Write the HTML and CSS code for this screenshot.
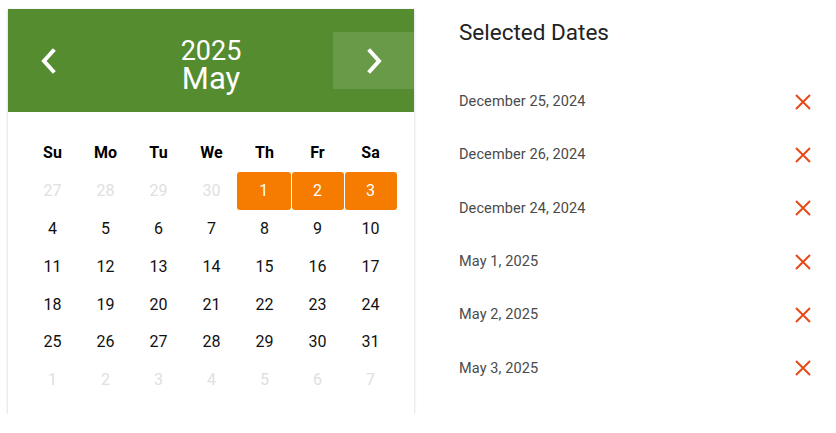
FILE: index.html
```html
<!DOCTYPE html>
<html>
<head>
<meta charset="utf-8">
<link rel="stylesheet" href="styles.css">
</head>
<body>
<div class="page">
  <div class="calendar">
    <div class="cal-header">
      <button class="nav">
        <svg width="22" height="26" viewBox="0 0 22 26"><path d="M15 3 L6 13 L15 23" fill="none" stroke="#fff" stroke-width="4" stroke-linecap="square"/></svg>
      </button>
      <div class="title">
        <div class="year">2025</div>
        <div class="month">May</div>
      </div>
      <button class="nav nav-active">
        <svg width="22" height="26" viewBox="0 0 22 26"><path d="M7 3 L16 13 L7 23" fill="none" stroke="#fff" stroke-width="4" stroke-linecap="square"/></svg>
      </button>
    </div>
    <div class="cal-body">
      <div class="grid">
        <div class="wd">Su</div><div class="wd">Mo</div><div class="wd">Tu</div><div class="wd">We</div><div class="wd">Th</div><div class="wd">Fr</div><div class="wd">Sa</div>
        <div class="d off">27</div><div class="d off">28</div><div class="d off">29</div><div class="d off">30</div><div class="d sel">1</div><div class="d sel">2</div><div class="d sel">3</div>
        <div class="d">4</div><div class="d">5</div><div class="d">6</div><div class="d">7</div><div class="d">8</div><div class="d">9</div><div class="d">10</div>
        <div class="d">11</div><div class="d">12</div><div class="d">13</div><div class="d">14</div><div class="d">15</div><div class="d">16</div><div class="d">17</div>
        <div class="d">18</div><div class="d">19</div><div class="d">20</div><div class="d">21</div><div class="d">22</div><div class="d">23</div><div class="d">24</div>
        <div class="d">25</div><div class="d">26</div><div class="d">27</div><div class="d">28</div><div class="d">29</div><div class="d">30</div><div class="d">31</div>
        <div class="d off">1</div><div class="d off">2</div><div class="d off">3</div><div class="d off">4</div><div class="d off">5</div><div class="d off">6</div><div class="d off">7</div>
      </div>
    </div>
  </div>
  <div class="selected">
    <h2>Selected Dates</h2>
    <ul class="list">
      <li><span>December 25, 2024</span><button class="rm"><svg width="18" height="18" viewBox="0 0 18 18"><path d="M2 2 L16 16 M16 2 L2 16" stroke="#e64a19" stroke-width="2"/></svg></button></li>
      <li><span>December 26, 2024</span><button class="rm"><svg width="18" height="18" viewBox="0 0 18 18"><path d="M2 2 L16 16 M16 2 L2 16" stroke="#e64a19" stroke-width="2"/></svg></button></li>
      <li><span>December 24, 2024</span><button class="rm"><svg width="18" height="18" viewBox="0 0 18 18"><path d="M2 2 L16 16 M16 2 L2 16" stroke="#e64a19" stroke-width="2"/></svg></button></li>
      <li><span>May 1, 2025</span><button class="rm"><svg width="18" height="18" viewBox="0 0 18 18"><path d="M2 2 L16 16 M16 2 L2 16" stroke="#e64a19" stroke-width="2"/></svg></button></li>
      <li><span>May 2, 2025</span><button class="rm"><svg width="18" height="18" viewBox="0 0 18 18"><path d="M2 2 L16 16 M16 2 L2 16" stroke="#e64a19" stroke-width="2"/></svg></button></li>
      <li><span>May 3, 2025</span><button class="rm"><svg width="18" height="18" viewBox="0 0 18 18"><path d="M2 2 L16 16 M16 2 L2 16" stroke="#e64a19" stroke-width="2"/></svg></button></li>
    </ul>
  </div>
</div>
</body>
</html>
```

FILE: styles.css
```css
* { box-sizing: border-box; }
html, body { margin: 0; padding: 0; background: #fff; }
body { font-family: Roboto, "Liberation Sans", sans-serif; }
.page {
  display: flex;
  align-items: flex-start;
  padding: 9px 8px 0 8px;
  gap: 45px;
}
.calendar {
  width: 406px;
  background: #fff;
  box-shadow: 0 1px 3px rgba(0,0,0,0.2);
}
.cal-header {
  background: #548c2f;
  height: 103px;
  display: flex;
  align-items: center;
}
.nav {
  width: 81px;
  height: 57px;
  border: 0;
  background: transparent;
  padding: 0;
  display: flex;
  align-items: center;
  justify-content: center;
}
.nav-active { background: rgba(255,255,255,0.12); }
.title {
  flex: 1;
  text-align: center;
  color: #fff;
  padding-top: 10px;
}
.year { font-size: 27px; line-height: 26px; }
.month { font-size: 31px; line-height: 30px; }
.cal-body { padding: 22px 18px 15px 18px; }
.grid {
  display: grid;
  grid-template-columns: repeat(7, 53px);
  grid-auto-rows: 37.8px;
}
.wd, .d {
  display: flex;
  align-items: center;
  justify-content: center;
  font-size: 16px;
  color: #111;
}
.wd { font-weight: 700; color: #000; }
.d.off { color: #e0e0e0; }
.d.sel {
  background: #f57c00;
  color: #fff;
  border-radius: 3px;
  margin: 0 0.5px;
}
.d.sel:nth-child(12) { margin-left: -1px; }
.selected { flex: 1; padding-right: 10px; }
.selected h2 {
  margin: 10px 0 0 0;
  font-size: 22.5px;
  font-weight: 400;
  color: #222;
  line-height: 26px;
}
.list {
  list-style: none;
  margin: 30px 0 0 0;
  padding: 0;
}
.list li {
  height: 53.3px;
  display: flex;
  align-items: center;
  justify-content: space-between;
  font-size: 14.5px;
  color: #4a4a4a;
  letter-spacing: 0.1px;
}
.rm {
  border: 0;
  background: transparent;
  padding: 0;
  width: 30px;
  height: 30px;
  display: flex;
  align-items: center;
  justify-content: center;
}
```
